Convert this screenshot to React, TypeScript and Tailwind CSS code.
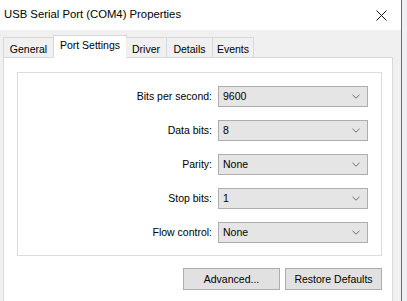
import React from "react";

const rows = [
  { label: "Bits per second:", value: "9600" },
  { label: "Data bits:", value: "8" },
  { label: "Parity:", value: "None" },
  { label: "Stop bits:", value: "1" },
  { label: "Flow control:", value: "None" },
];

const tabs = ["General", "Port Settings", "Driver", "Details", "Events"];

function Chevron() {
  return (
    <svg width="8" height="5" viewBox="0 0 8 5" className="shrink-0">
      <path d="M0.5 0.8 L4 4.2 L7.5 0.8" fill="none" stroke="#707070" strokeWidth="1" />
    </svg>
  );
}

export default function App() {
  return (
    <div
      className="w-[407px] h-[301px] flex bg-[#f0f0f0] text-black overflow-hidden"
      style={{ fontFamily: '"Liberation Sans", Arial, sans-serif' }}
    >
      <div className="w-[402px] h-full flex flex-col border-r border-[#2b79c2]">
        {/* title bar */}
        <div className="h-[30px] bg-white flex items-center justify-between pl-[4px] pr-[14px] shrink-0">
          <span className="text-[11.3px] leading-none">USB Serial Port (COM4) Properties</span>
          <svg width="11" height="11" viewBox="0 0 11 11">
            <path d="M0.5 0.5 L10.5 10.5 M10.5 0.5 L0.5 10.5" stroke="#111" strokeWidth="1" />
          </svg>
        </div>

        <div className="flex-1 flex flex-col pl-[3px] pr-[8px] pt-[5px]">
          {/* tabs */}
          <div className="flex items-end h-[22px] shrink-0 relative z-10">
            {tabs.map((t) =>
              t === "Port Settings" ? (
                <div
                  key={t}
                  className="h-[23px] -mb-px w-[74px] bg-white border border-b-0 border-[#d9d9d9] flex items-start justify-center pt-[4px] text-[10.5px] leading-none"
                >
                  {t}
                </div>
              ) : (
                <div
                  key={t}
                  className={`h-[20px] bg-[#f0f0f0] border border-b-0 border-[#d9d9d9] -ml-px first:ml-0 flex items-center justify-center pt-[3px] text-[10.5px] leading-none ${
                    t === "General" ? "w-[50px] border-r-0" : t === "Driver" ? "w-[41px] border-l-0" : t === "Details" ? "w-[47px]" : "w-[42px]"
                  }`}
                >
                  {t}
                </div>
              )
            )}
          </div>

          {/* tab page */}
          <div className="flex-1 bg-white border border-b-0 border-[#d9d9d9] pl-[13px] pr-[10px] pt-[14px]">
            <div className="h-[184px] border border-[#dcdcdc] flex flex-col gap-[13px] pt-[13px] pr-[13px]">
              {rows.map((r) => (
                <div key={r.label} className="flex items-center justify-end gap-[6px] h-[21px]">
                  <span className="text-[10.5px] leading-none">{r.label}</span>
                  <div className="w-[150px] h-[21px] bg-[#e5e5e5] border border-[#adadad] flex items-center justify-between pl-[4px] pr-[7px]">
                    <span className="text-[10.5px] leading-none">{r.value}</span>
                    <Chevron />
                  </div>
                </div>
              ))}
            </div>

            <div className="flex justify-end gap-[5px] mt-[12px]">
              <div className="w-[97px] h-[22px] bg-[#e1e1e1] border border-[#adadad] flex items-center justify-center text-[10.5px] leading-none">
                Advanced...
              </div>
              <div className="w-[97px] h-[22px] bg-[#e1e1e1] border border-[#adadad] flex items-center justify-center text-[10.5px] leading-none">
                Restore Defaults
              </div>
            </div>
          </div>
        </div>
      </div>
    </div>
  );
}
